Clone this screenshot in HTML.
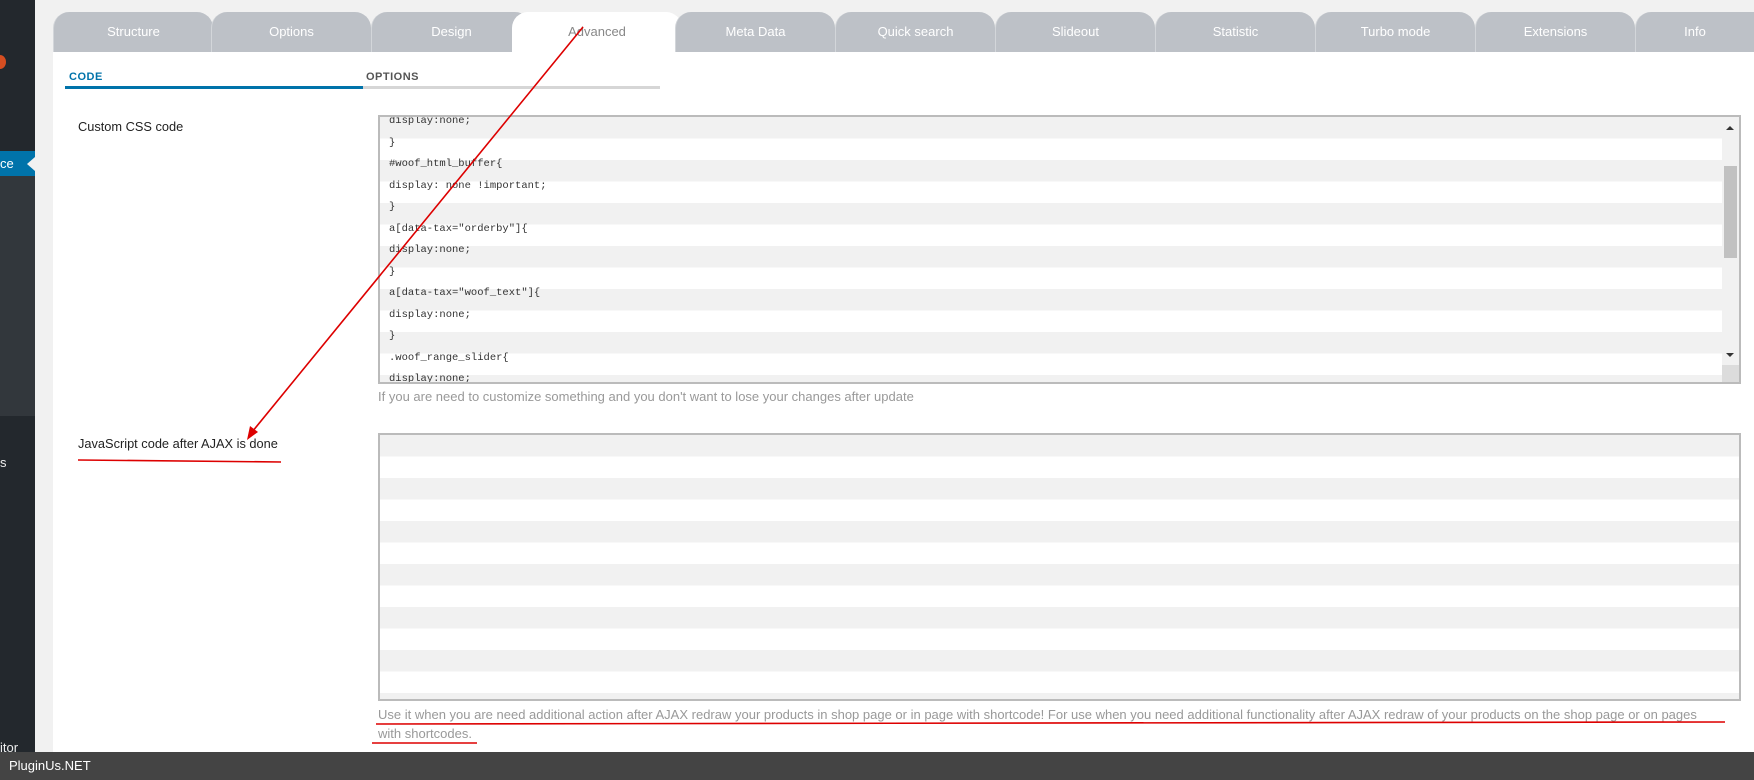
<!DOCTYPE html>
<html><head><meta charset="utf-8"><style>
*{margin:0;padding:0;box-sizing:border-box}
body{width:1754px;height:780px;overflow:hidden;background:#f1f1f1;font-family:"Liberation Sans",sans-serif;position:relative}
.abs{position:absolute}
.side{left:0;top:0;width:35px;height:752px;background:#23282d}
.tab{position:absolute;top:12px;height:40px;background:#bdc1c7;color:#fff;font-size:13px;text-align:center;line-height:40px;border-radius:16px 16px 0 0;border-left:1px solid #d3d6da}
.tab.act{background:#fff;color:#888}
.content{left:53px;top:52px;width:1701px;height:700px;background:#fff}
.ta{position:absolute;left:378px;width:1363px;border:2px solid #bbb;overflow:hidden;
background:repeating-linear-gradient(#f1f1f1 0 21.5px,#fff 21.5px 43px)}
.ta pre{font-family:"Liberation Mono",monospace;font-size:10.5px;color:#333;line-height:21.5px;padding-left:9px;margin-top:-6px}
.hint{position:absolute;left:378px;color:#999;font-size:13px;line-height:19px}
.lbl{position:absolute;left:78px;font-size:12.8px;color:#222}
</style></head><body>
<div class="abs side"></div>
<div class="abs" style="left:0;top:151px;width:35px;height:25px;background:#0073aa;color:#fff;font-size:13px;line-height:25px">ce</div>
<div class="abs" style="left:27px;top:157px;width:0;height:0;border:7px solid transparent;border-right:8px solid #f1f1f1;border-left:0"></div>
<div class="abs" style="left:0;top:176px;width:35px;height:240px;background:#32373c"></div>
<div class="abs" style="left:-6px;top:55px;width:12px;height:14px;border-radius:50%;background:#d54e21"></div>
<div class="abs" style="left:0;top:455px;color:#eee;font-size:13px">s</div>
<div class="abs" style="left:0;top:740px;color:#eee;font-size:13px">itor</div>

<div class="abs content"></div>
<div class="tab" style="left:53px;width:160px">Structure</div>
<div class="tab" style="left:211px;width:160px">Options</div>
<div class="tab" style="left:371px;width:160px">Design</div>
<div class="tab act" style="left:512px;width:170px;border-left:none">Advanced</div>
<div class="tab" style="left:675px;width:160px">Meta Data</div>
<div class="tab" style="left:835px;width:160px">Quick search</div>
<div class="tab" style="left:995px;width:160px">Slideout</div>
<div class="tab" style="left:1155px;width:160px">Statistic</div>
<div class="tab" style="left:1315px;width:160px">Turbo mode</div>
<div class="tab" style="left:1475px;width:160px">Extensions</div>
<div class="tab" style="left:1635px;width:119px;border-radius:16px 0 0 0">Info</div>

<div class="abs" style="left:69px;top:71px;font-size:11px;font-weight:bold;color:#0073aa;letter-spacing:.5px">CODE</div>
<div class="abs" style="left:366px;top:71px;font-size:11px;font-weight:bold;color:#555;letter-spacing:.5px">OPTIONS</div>
<div class="abs" style="left:65px;top:86px;width:298px;height:3px;background:#0073aa"></div>
<div class="abs" style="left:363px;top:86px;width:297px;height:3px;background:#d6d6d6"></div>

<div class="lbl" style="top:119px">Custom CSS code</div>
<div class="ta" style="top:115px;height:269px">
<pre>display:none;
}
#woof_html_buffer{
display: none !important;
}
a[data-tax="orderby"]{
display:none;
}
a[data-tax="woof_text"]{
display:none;
}
.woof_range_slider{
display:none;</pre>
<div class="abs" style="right:0;top:0;width:17px;height:265px;background:#f1f1f1"></div>
<div class="abs" style="right:2px;top:49px;width:13px;height:92px;background:#c1c1c1"></div>
<div class="abs" style="right:5px;top:9px;border:4px solid transparent;border-bottom:4px solid #333;border-top:0"></div>
<div class="abs" style="right:5px;top:236px;border:4px solid transparent;border-top:4px solid #333;border-bottom:0"></div>
<div class="abs" style="right:0;bottom:0;width:17px;height:17px;background:#dcdcdc"></div>
</div>
<div class="hint" style="top:387px">If you are need to customize something and you don't want to lose your changes after update</div>

<div class="lbl" style="top:436px">JavaScript code after AJAX is done</div>
<div class="ta" style="top:433px;height:268px"></div>
<div class="hint" style="top:705px;width:1355px">Use it when you are need additional action after AJAX redraw your products in shop page or in page with shortcode! For use when you need additional functionality after AJAX redraw of your products on the shop page or on pages<br>with shortcodes.</div>

<svg class="abs" style="left:0;top:0" width="1754" height="780">
<line x1="583" y1="27" x2="252" y2="432" stroke="#d00" stroke-width="1.6"/>
<polygon points="247,440 250,426 258,432" fill="#d00"/>
<line x1="78" y1="460" x2="281" y2="462" stroke="#d00" stroke-width="1.6"/>
<line x1="376" y1="724" x2="1725" y2="722" stroke="#d00" stroke-width="1.6"/>
<line x1="372" y1="743" x2="477" y2="743" stroke="#d00" stroke-width="1.6"/>
</svg>

<div class="abs" style="left:0;top:752px;width:1754px;height:28px;background:#444;color:#fff;font-size:13px;line-height:28px;padding-left:9px">PluginUs.NET</div>
</body></html>
